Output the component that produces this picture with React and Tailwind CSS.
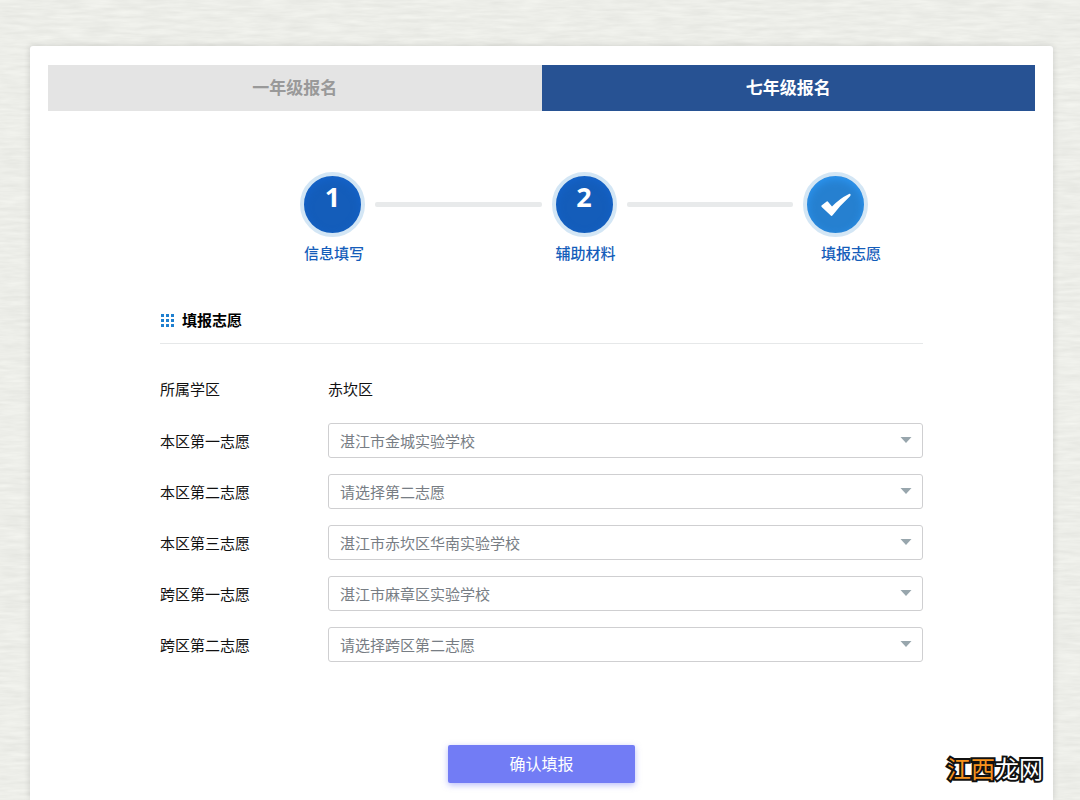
import { useState } from "react";
import clsx from "clsx";

const tabs = [
    { id: "grade1", name: "一年级报名" },
    { id: "grade7", name: "七年级报名" },
];

const steps = [
    { id: 1, name: "信息填写", done: false },
    { id: 2, name: "辅助材料", done: false },
    { id: 3, name: "填报志愿", done: true },
];

const choices = [
    { id: "local1", label: "本区第一志愿", options: ["湛江市金城实验学校", "请选择第一志愿"] },
    { id: "local2", label: "本区第二志愿", options: ["请选择第二志愿", "湛江市金城实验学校"] },
    { id: "local3", label: "本区第三志愿", options: ["湛江市赤坎区华南实验学校", "请选择第三志愿"] },
    { id: "cross1", label: "跨区第一志愿", options: ["湛江市麻章区实验学校", "请选择跨区第一志愿"] },
    { id: "cross2", label: "跨区第二志愿", options: ["请选择跨区第二志愿", "湛江市麻章区实验学校"] },
];

// Paper grain behind the card
function PaperTexture() {
    return (
        <svg className="absolute inset-0 w-full h-full" aria-hidden="true">
            <filter id="paper" x="0" y="0" width="100%" height="100%" colorInterpolationFilters="sRGB">
                <feTurbulence type="fractalNoise" baseFrequency="0.035 0.26" numOctaves="3" seed="4" />
                <feColorMatrix values="0.07 0 0 0 0.892  0.07 0 0 0 0.896  0.07 0 0 0 0.876  0 0 0 0 1" />
            </filter>
            <rect width="100%" height="100%" filter="url(#paper)" />
        </svg>
    );
}

function CheckMark() {
    return (
        <svg viewBox="0 0 30 24" className="w-[30px] h-6" fill="#fff" aria-hidden="true">
            <path d="M0.5 12.5 L5.7 8.5 Q6.6 8 7.2 8.9 L11 13.5 Q18.5 5.5 28 0.9 Q29.6 0.3 29.6 2 Q29.5 3 28.3 4 Q19.5 12 11.6 22.3 Q10.5 23.6 9.5 22.3 L0.7 14 Q0 13.2 0.5 12.5 Z" />
        </svg>
    );
}

function GridIcon() {
    return (
        <svg viewBox="0 0 13 13" className="w-[13px] h-[13px]" fill="#1f80d0" aria-hidden="true">
            {[0, 5, 10].map((y) => [0, 5, 10].map((x) => <rect key={x + "-" + y} x={x} y={y} width="3" height="3" />))}
        </svg>
    );
}

function Step({ step, last }) {
    return (
        <>
            <li className="w-[65px] shrink-0">
                <div
                    className={clsx(
                        "flex h-[65px] justify-center rounded-full border-4 border-[#d3e6f5] text-[27px] leading-[42px] font-bold text-white",
                        step.done
                            ? "items-center bg-[#2680d0] shadow-[inset_0_3px_8px_#2b95f2]"
                            : "items-start bg-[#145dba] shadow-[inset_0_3px_8px_#1463cb]"
                    )}
                >
                    {step.done ? <CheckMark /> : step.id}
                </div>
                <p
                    className={clsx(
                        "mt-[6px] whitespace-nowrap text-[15px] leading-5 font-medium text-[#145dba]",
                        step.done ? "pl-[18px]" : "pl-1"
                    )}
                >
                    {step.name}
                </p>
            </li>
            {!last && <li className="mt-[30px] h-[5px] flex-1 rounded-xs bg-[#e8eaeb]" aria-hidden="true" />}
        </>
    );
}

function ChoiceRow({ choice }) {
    return (
        <div className="flex items-center">
            <label htmlFor={choice.id} className="w-[168px] shrink-0">
                {choice.label}
            </label>
            <div className="relative flex-1">
                <select
                    id={choice.id}
                    className="block w-full h-[35px] appearance-none rounded-[3px] border border-[#cfcfd1] bg-white pl-[11px] pr-8 text-[#777d84]"
                >
                    {choice.options.map((option) => (
                        <option key={option}>{option}</option>
                    ))}
                </select>
                <svg
                    viewBox="0 0 12 6"
                    className="pointer-events-none absolute right-[11px] top-[14px] w-3 h-[6px]"
                    fill="#98a6ad"
                    aria-hidden="true"
                >
                    <path d="M0.5 0h11L6 6z" />
                </svg>
            </div>
        </div>
    );
}

export default function App() {
    const [activeTab, setActiveTab] = useState("grade7");

    return (
        <div className="relative flex min-h-screen flex-col bg-[#eceee9] pt-[46px] pl-[30px] pr-[27px] font-['Open_Sans','Noto_Sans_CJK_SC',sans-serif] text-[15px] leading-5 text-[#111]">
            <PaperTexture />

            <main className="relative flex-1 rounded-t-[3px] bg-white pt-[19px] pb-4 shadow-[0_0_6px_rgba(0,0,0,0.15)]">
                {/* Grade tabs */}
                <nav className="mx-[18px] flex">
                    {tabs.map((tab) => (
                        <button
                            key={tab.id}
                            onClick={() => setActiveTab(tab.id)}
                            className={clsx(
                                "h-[46px] flex-1 text-[17px] font-bold",
                                activeTab === tab.id ? "bg-[#275293] text-white" : "bg-[#e4e4e4] text-[#999]"
                            )}
                        >
                            {tab.name}
                        </button>
                    ))}
                </nav>

                <div className="mx-[130px]">
                    {/* Progress */}
                    <ol className="ml-[140px] mt-[61px] flex max-w-[568px] gap-[10px]">
                        {steps.map((step, i) => (
                            <Step key={step.id} step={step} last={i === steps.length - 1} />
                        ))}
                    </ol>

                    <h2 className="mt-[47px] flex items-center gap-2 border-b border-[#e6e8e9] pb-[13px] pl-px font-bold text-black">
                        <GridIcon />
                        填报志愿
                    </h2>

                    <form onSubmit={(e) => e.preventDefault()}>
                        <dl className="mt-[35px] flex">
                            <dt className="w-[168px]">所属学区</dt>
                            <dd>赤坎区</dd>
                        </dl>
                        <div className="mt-6 space-y-4">
                            {choices.map((choice) => (
                                <ChoiceRow key={choice.id} choice={choice} />
                            ))}
                        </div>
                        <button
                            type="submit"
                            className="mx-auto mt-[83px] block h-[38px] w-[187px] rounded-xs bg-[#727cf5] text-base text-white shadow-[0_2px_6px_rgba(114,124,245,0.5)]"
                        >
                            确认填报
                        </button>
                    </form>
                </div>
            </main>

            {/* Site mark */}
            <p className="absolute bottom-[15px] right-[37px] text-2xl leading-8 font-normal text-white [-webkit-text-stroke:4px_#111] [paint-order:stroke_fill]">
                <span className="text-[#f7931e]">江西</span>龙网
            </p>
        </div>
    );
}
